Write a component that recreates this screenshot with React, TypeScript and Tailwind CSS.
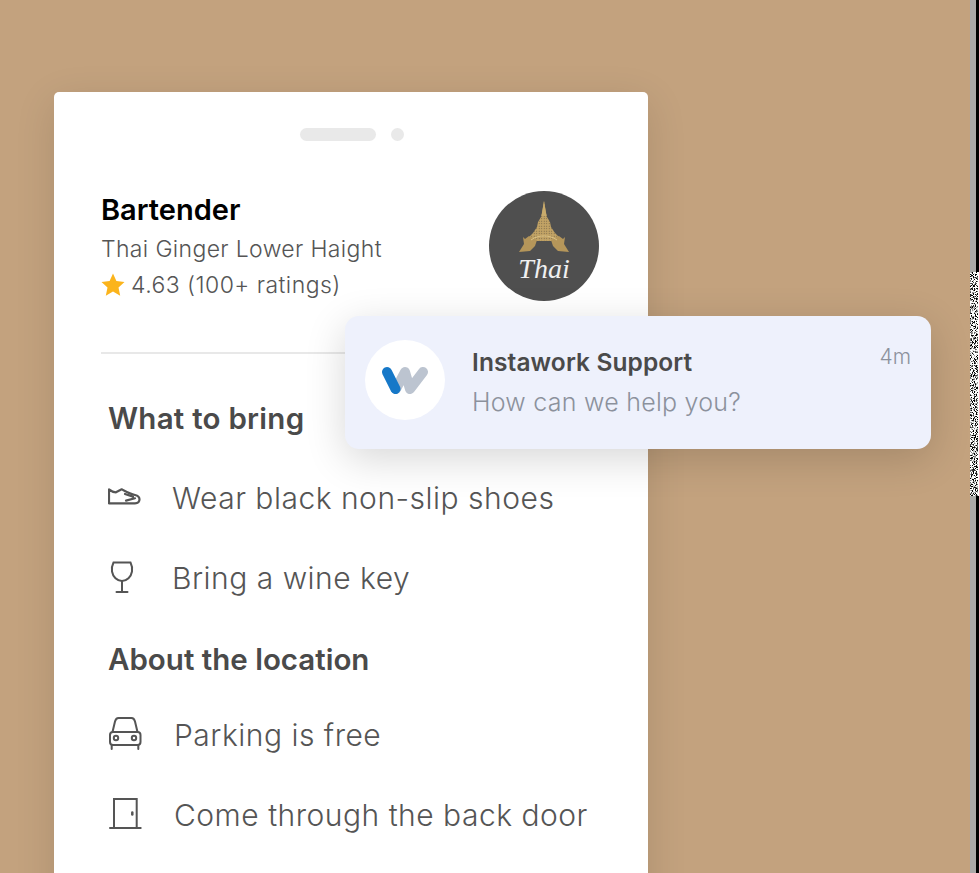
import React from 'react';

const font = { fontFamily: '"Inter", "Open Sans", sans-serif' };

const ShoeIcon = () => (
  <svg width="34" height="20" viewBox="0 0 34 20" fill="none" stroke="#555" strokeWidth="2.200" strokeLinejoin="round" strokeLinecap="round">
    <path d="M1 1.500V15.300h26c3 0 4.500-1.500 4.500-4 0-2-1.500-3.500-4.500-4.300-5-1.200-9-3.500-13.300-5.700L8 4.300C6 4.300 3 3 1 1.500z" />
    <path d="M17 6l8 2.600M18 12.600l9-2.300" />
  </svg>
);

const GlassIcon = () => (
  <svg width="24" height="34" viewBox="0 0 24 34" fill="none" stroke="#555" strokeWidth="2" strokeLinecap="round">
    <path d="M3.500 1.500h17c1.500 3 2 6 1.500 9-1 5.500-5 9.500-10 9.500S3 16 2 10.500c-.5-3 0-6 1.500-9z" />
    <path d="M12 20v11M6.500 31h11" />
  </svg>
);

const CarIcon = () => (
  <svg width="34" height="36" viewBox="0 0 34 36" fill="none" stroke="#555" strokeWidth="2" strokeLinecap="round" strokeLinejoin="round">
    <path d="M4.500 15l2.500-10.500c.5-2 1.500-3.500 3.500-3.500h13c2 0 3 1.500 3.500 3.500L29.500 15" />
    <rect x="2" y="15" width="30.500" height="13" rx="3" />
    <circle cx="8" cy="21" r="2.200" />
    <circle cx="26" cy="21" r="2.200" />
    <path d="M3.700 28v4M30.300 28v4" />
  </svg>
);

const DoorIcon = () => (
  <svg width="34" height="34" viewBox="0 0 34 34" fill="none" stroke="#555" strokeWidth="2" strokeLinecap="round">
    <path d="M6 30V1h22.700v29M2 30h30.700" />
    <path d="M24.300 14.500v2" strokeWidth="2.500" />
  </svg>
);

const StarIcon = () => (
  <svg width="24" height="24" viewBox="0 0 24 24" fill="#fbb41c">
    <path d="M12 .5l3.400 7.600 8.100.9-6 5.600 1.700 8.200-7.200-4.200-7.200 4.200 1.700-8.200-6-5.600 8.100-.9z" />
  </svg>
);

const TempleLogo = () => (
  <svg width="52" height="54" viewBox="0 0 52 54" fill="none">
    <defs>
      <pattern id="filigree" width="2.500" height="2.500" patternUnits="userSpaceOnUse">
        <rect width="2.500" height="2.500" fill="#c2a365" />
        <circle cx="1.200" cy="1.200" r=".5" fill="#6a5c44" />
      </pattern>
    </defs>
    {/* spire and roof */}
    <path
      d="M26 1l1.500 9 1.500 7 3 5 1 5 4 6 5 5v3H10v-3l5-5 4-6 1-5 3-5 1.500-7z"
      fill="url(#filigree)"
    />
    <path d="M26 1l1.500 9 1 6h-5l1-6z" fill="#c9ab6c" />
    {/* curled eaves either side of the arch */}
    <path d="M11 36l-4 3-2-2 1 7-5 8 11-1 5-5 2-6z" fill="#b5965a" />
    <path d="M41 36l4 3 2-2-1 7 5 8-11-1-5-5-2-6z" fill="#b5965a" />
    <path d="M13 40c4-3 8-4 13-4s9 1 13 4" stroke="#dcc285" strokeWidth="1" />
  </svg>
);

const WLogo = () => (
  <svg width="48" height="32" viewBox="0 0 48 32" fill="none" strokeLinecap="round" strokeWidth="10">
    <path d="M15 25L24 8 29 25 42 8" stroke="#bcc4d0" strokeLinejoin="round" />
    <path d="M6 8l8.500 17" stroke="#1678c8" />
  </svg>
);

const Row = ({ icon, text, gap }: { icon: React.ReactNode; text: string; gap: string }) => (
  <div className={`flex h-[80px] items-center text-[30px] font-light tracking-[0.5px] text-[#555] ${gap}`}>
    {icon}
    <span>{text}</span>
  </div>
);

export default function App() {
  return (
    <div className="relative h-[873px] w-[979px] overflow-hidden bg-[#c3a27e] pl-[54px] pt-[92px]" style={font}>
      <div className="h-[900px] w-[594px] rounded-t-[5px] bg-white px-[47px] shadow-[0_10px_40px_rgba(0,0,0,0.12)]">
        <div className="flex justify-center gap-[15px] pl-[2px] pt-[36px]">
          <div className="h-[13px] w-[76px] rounded-full bg-[#e9e9e9]" />
          <div className="h-[13px] w-[13px] rounded-full bg-[#e9e9e9]" />
        </div>
        <div className="mt-[50px] flex justify-between">
          <div>
            <h1 className="text-[29px] font-semibold leading-[38px] text-black">Bartender</h1>
            <p className="mt-[2px] text-[23px] font-light leading-[36px] tracking-[0.35px] text-[#555]">Thai Ginger Lower Haight</p>
            <div className="flex h-[36px] items-center gap-[6px] text-[23px] font-light tracking-[0.45px] text-[#555]">
              <StarIcon />
              <span>4.63 (100+ ratings)</span>
            </div>
          </div>
          <div className="mr-[2px] flex h-[110px] w-[110px] flex-col items-center rounded-full bg-[#4f4f4f] pt-[9px]">
            <TempleLogo />
            <span className="text-[28px] italic leading-[30px] text-[#f0f0f0]" style={{ fontFamily: '"Liberation Serif", serif' }}>Thai</span>
          </div>
        </div>
        <div className="mt-[49px] h-[2px] bg-[#e8e8e8]" />
        <div className="pl-[7px]">
          <h2 className="mt-[42px] text-[29.500px] font-semibold leading-[44px] tracking-[0.25px] text-[#4a4a4a]">What to bring</h2>
          <div className="mt-[18px]">
            <Row icon={<ShoeIcon />} text="Wear black non-slip shoes" gap="gap-[30px]" />
            <Row icon={<GlassIcon />} text="Bring a wine key" gap="gap-[38px] pl-[2px]" />
          </div>
          <h2 className="mt-[19px] text-[29.500px] font-semibold leading-[44px] text-[#4a4a4a]">About the location</h2>
          <div className="mt-[14px]">
            <Row icon={<CarIcon />} text="Parking is free" gap="gap-[32px]" />
            <Row icon={<DoorIcon />} text="Come through the back door" gap="gap-[32px]" />
          </div>
        </div>
      </div>

      {/* notification over the card */}
      <div className="absolute left-[345px] top-[316px] flex h-[133px] w-[586px] rounded-[14px] bg-[#eef1fc] px-[20px] shadow-[0_10px_40px_rgba(0,0,0,0.16)]">
        <div className="mt-[24px] flex h-[80px] w-[80px] items-center justify-center rounded-full bg-white">
          <WLogo />
        </div>
        <div className="ml-[27px] mt-[26px] flex-1">
          <div className="text-[24.500px] font-semibold leading-[40px] tracking-[0.1px] text-[#4a4a4a]">Instawork Support</div>
          <div className="text-[25px] font-light leading-[40px] tracking-[0.25px] text-[#8c919c]">How can we help you?</div>
        </div>
        <div className="mt-[26px] text-[21px] font-light leading-[30px] text-[#8c919c]">4m</div>
      </div>

      {/* grey and black edge columns with a speckled patch */}
      <div className="absolute right-0 top-0 flex h-[873px] w-[9px]">
        <div className="w-[6px] bg-[#aaa9a7]" />
        <div className="w-[3px] bg-black" />
      </div>
      <svg className="absolute right-0 top-[272px]" width="9" height="224">
        <filter id="speckle">
          <feTurbulence type="fractalNoise" baseFrequency="1.1" numOctaves="1" seed="4" />
          <feColorMatrix values="0 0 0 0 0  0 0 0 0 0  0 0 0 0 0  7 0 0 0 -3.300" />
        </filter>
        <rect width="9" height="224" fill="#fff" />
        <rect width="7" height="224" filter="url(#speckle)" />
      </svg>
    </div>
  );
}
